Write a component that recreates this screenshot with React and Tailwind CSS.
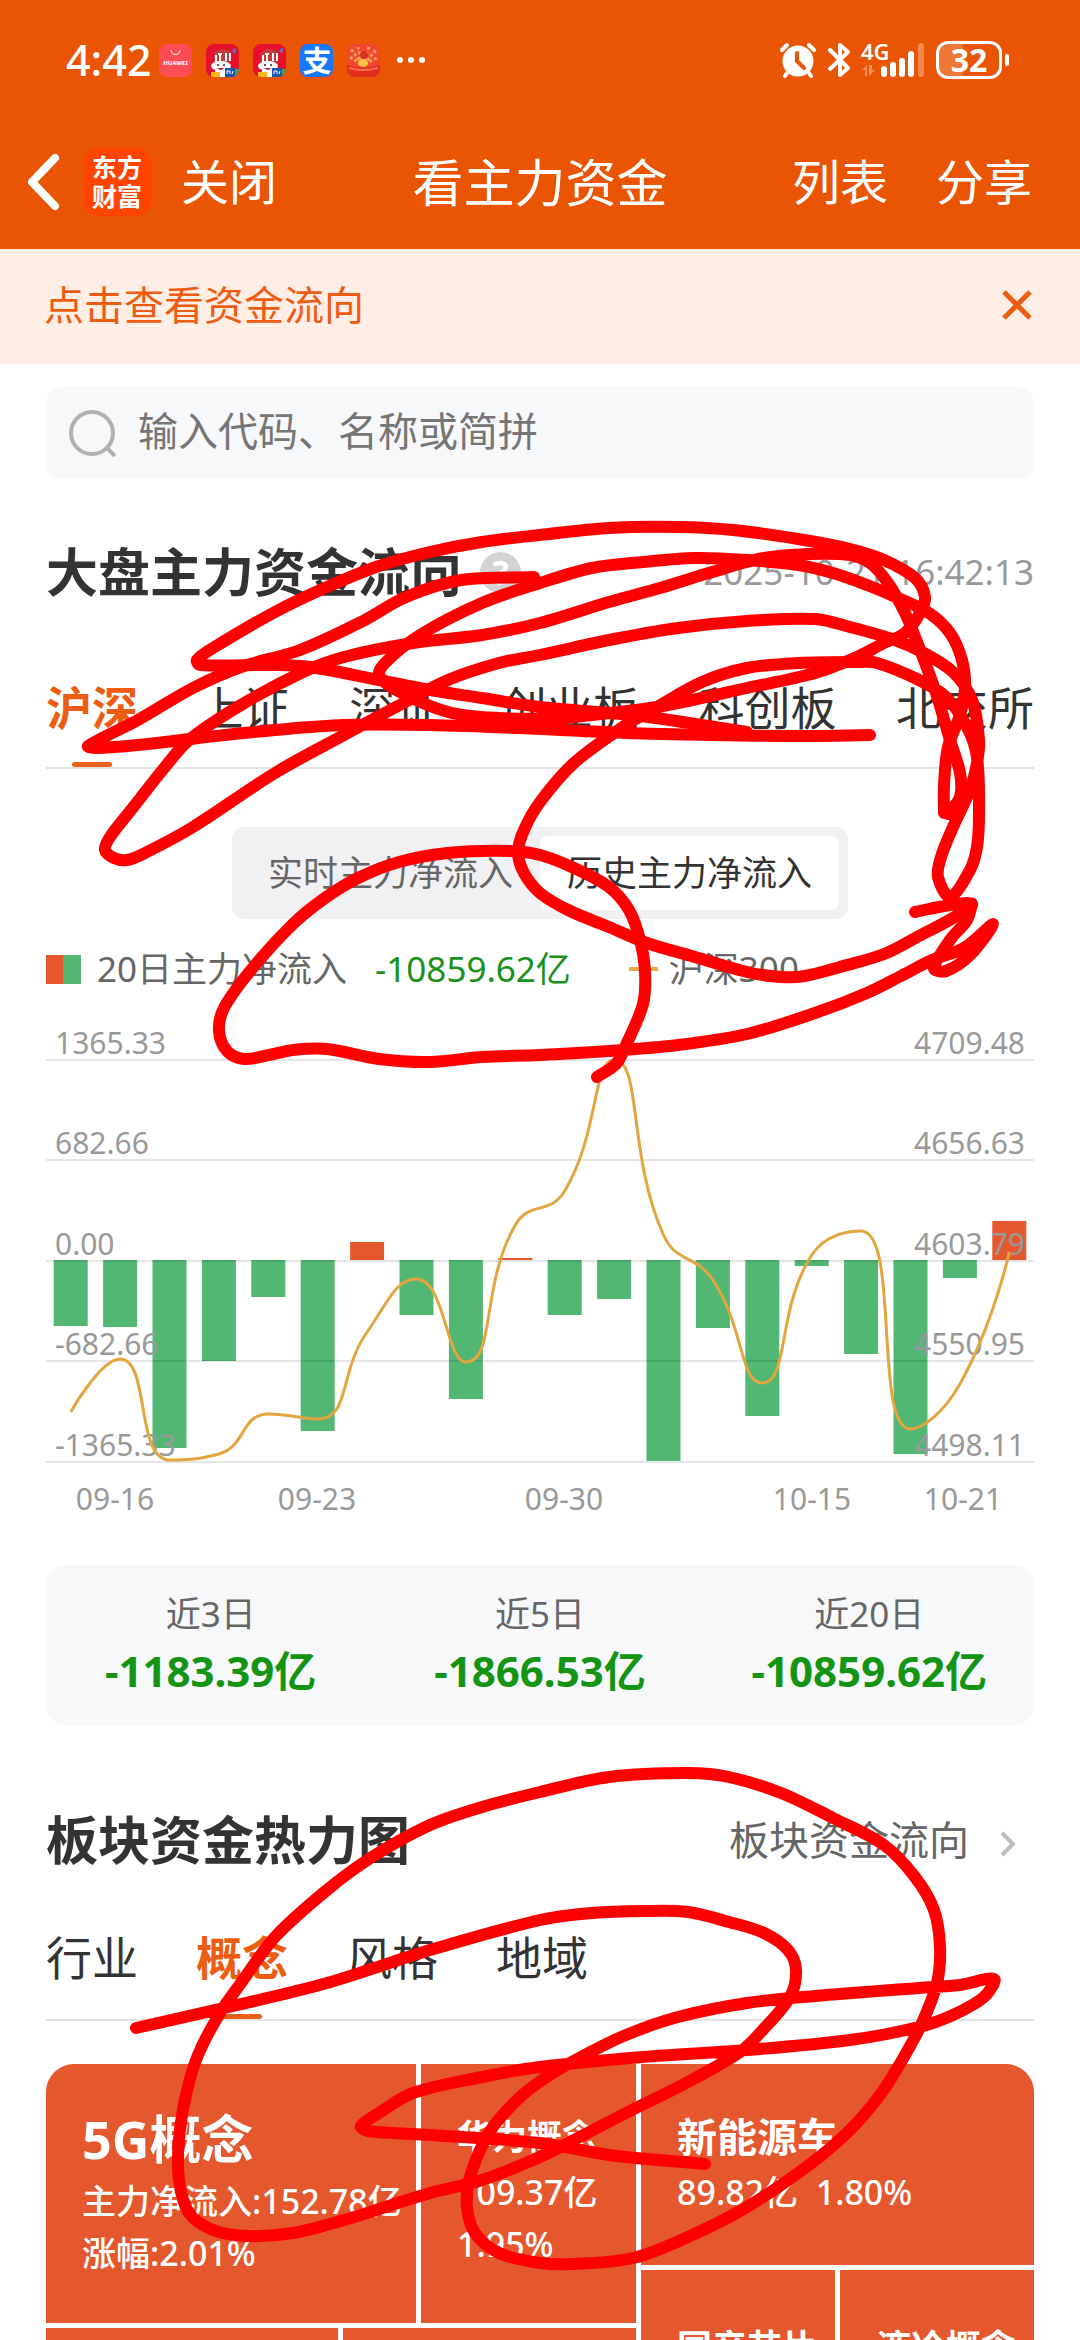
import React, { useState } from 'react';

const INDEX_TABS = ['沪深', '上证', '深证', '创业板', '科创板', '北交所'];
const SECTOR_TABS = ['行业', '概念', '风格', '地域'];

const SUMMARY = [
  { label: '近3日', value: '-1183.39亿' },
  { label: '近5日', value: '-1866.53亿' },
  { label: '近20日', value: '-10859.62亿' },
];

// Net inflow per trading day, in chart units (negative = outflow)
const FLOWS = [-66, -67, -188, -101, -37, -171, 18, -55, -139, 2, -55, -39, -201, -68, -156, -6, -94, -194, -18, 39];
// CSI 300 close, as a height in the plot
const INDEX_LINE = [382, 329, 430, 424, 384, 389, 302, 249, 332, 195, 161, 30, 205, 250, 353, 225, 201, 399, 354, 222];

const GRID_ROWS = [
  { y: 30, left: '1365.33', right: '4709.48' },
  { y: 130, left: '682.66', right: '4656.63' },
  { y: 231, left: '0.00', right: '4603.79' },
  { y: 331, left: '-682.66', right: '4550.95' },
  { y: 432, left: '-1365.33', right: '4498.11' },
];

const DATES = [
  { x: 69, label: '09-16' },
  { x: 271, label: '09-23' },
  { x: 518, label: '09-30' },
  { x: 766, label: '10-15' },
  { x: 917, label: '10-21' },
];

// Freehand pen strokes drawn over the page
const STROKES = [
  [[944, 813], [944, 785], [948, 747], [960, 715], [965, 687], [962, 660], [950, 633], [929, 613], [898, 598], [867, 585], [833, 573], [798, 565], [747, 560], [695, 558], [643, 562], [592, 568], [540, 583], [482, 603], [420, 635], [386, 662], [379, 675], [396, 690], [448, 712], [499, 718], [560, 718], [609, 713], [657, 707], [747, 688], [815, 673], [857, 657], [884, 643], [905, 633], [920, 613], [925, 597], [915, 578], [884, 560], [850, 549], [798, 539], [733, 530], [678, 527], [609, 528], [540, 535], [482, 542], [430, 552], [379, 566], [327, 587], [275, 612], [213, 648], [197, 660], [200, 665], [275, 665], [310, 667], [379, 680], [430, 690], [482, 698], [540, 707], [640, 716], [747, 732]],
  [[534, 577], [461, 580], [406, 597], [361, 622], [300, 650], [241, 667], [193, 688], [138, 720], [88, 746], [96, 748], [138, 745], [207, 737], [275, 730], [344, 725], [430, 725], [540, 729], [626, 733], [712, 735], [798, 736], [870, 735]],
  [[948, 814], [960, 797], [960, 773], [950, 740], [936, 693], [919, 647], [905, 613], [888, 583], [870, 563], [850, 555], [809, 554], [764, 558], [712, 572], [660, 588], [609, 602], [540, 623], [482, 635], [413, 643], [344, 657], [303, 672], [241, 705], [189, 740], [165, 767], [131, 810], [110, 837], [105, 850], [114, 858], [127, 860], [145, 853], [193, 827], [275, 773], [344, 735], [396, 707], [448, 680], [499, 663], [540, 655], [609, 640], [678, 628], [747, 621], [815, 619], [850, 627], [895, 640], [922, 652], [953, 672], [972, 700], [979, 740], [977, 763], [970, 790], [953, 827], [941, 857], [938, 877], [950, 897], [970, 870], [977, 847], [979, 813], [977, 757], [967, 727], [946, 697], [919, 680], [877, 663], [857, 662], [798, 663], [747, 668], [702, 682], [657, 707], [623, 727], [574, 763], [540, 802], [524, 830], [518, 852], [524, 873], [540, 893], [568, 910], [609, 927], [647, 943], [695, 957], [747, 972], [781, 977], [805, 976], [840, 967], [884, 954], [919, 936], [953, 918], [972, 904], [950, 905], [915, 912]],
  [[972, 904], [967, 920], [950, 940], [934, 968], [946, 971], [970, 955], [993, 924], [964, 948], [932, 960], [901, 976], [867, 993], [815, 1013], [747, 1034], [678, 1045], [609, 1051], [540, 1055], [482, 1057], [430, 1062], [379, 1059], [327, 1049], [293, 1050], [269, 1055], [244, 1059], [227, 1051], [219, 1031], [224, 1008], [251, 970], [293, 924], [325, 898], [358, 878], [399, 862], [448, 853], [510, 851], [540, 855], [574, 868], [609, 887], [629, 910], [640, 940], [645, 972], [643, 1004], [626, 1045], [616, 1064], [597, 1077]],
  [[136, 2028], [224, 2008], [327, 1983], [430, 1950], [540, 1920], [592, 1913], [643, 1911], [688, 1912], [729, 1922], [764, 1933], [788, 1950], [796, 1970], [790, 1997], [760, 2033], [740, 2052], [688, 2082], [626, 2113], [574, 2140], [540, 2157], [482, 2180], [430, 2193], [344, 2220], [293, 2233], [248, 2236], [213, 2230], [189, 2213], [179, 2180], [179, 2140], [186, 2095], [198, 2055], [220, 2013], [241, 1983], [275, 1937], [327, 1890], [372, 1857], [430, 1825], [482, 1807], [540, 1792], [609, 1777], [688, 1773], [729, 1777], [781, 1793], [833, 1818], [884, 1845], [915, 1877], [934, 1910], [940, 1947], [937, 1983], [922, 2023], [901, 2062], [880, 2095], [850, 2130], [809, 2165], [747, 2207], [688, 2237], [633, 2258], [574, 2264], [540, 2263], [499, 2253], [475, 2233], [467, 2207], [470, 2177], [489, 2133], [517, 2100], [545, 2078], [581, 2057], [626, 2035], [678, 2017], [747, 2003], [815, 1996], [919, 1988], [960, 1985], [994, 1979], [984, 1997], [953, 2015], [919, 2027], [850, 2040], [747, 2050], [643, 2057], [540, 2067], [482, 2077], [413, 2093], [379, 2113], [361, 2126], [368, 2131], [413, 2134], [540, 2143], [609, 2155], [705, 2164]],
];

// Catmull-Rom through every point
const penPath = (pts) => {
  let d = `M${pts[0][0]} ${pts[0][1]}`;
  for (let i = 0; i < pts.length - 1; i++) {
    const p0 = pts[i - 1] || pts[i];
    const p1 = pts[i];
    const p2 = pts[i + 1];
    const p3 = pts[i + 2] || p2;
    const len = Math.hypot(p2[0] - p1[0], p2[1] - p1[1]);
    const k1 = len / (len + Math.hypot(p1[0] - p0[0], p1[1] - p0[1])) / 3;
    const k2 = len / (len + Math.hypot(p3[0] - p2[0], p3[1] - p2[1])) / 3;
    d += `C${p1[0] + (p2[0] - p0[0]) * k1} ${p1[1] + (p2[1] - p0[1]) * k1} ${p2[0] - (p3[0] - p1[0]) * k2} ${p2[1] - (p3[1] - p1[1]) * k2} ${p2[0]} ${p2[1]}`;
  }
  return d;
};

const clamp = (v, a, b) => Math.max(Math.min(a, b), Math.min(Math.max(a, b), v));

// Smooth line that never overshoots its neighbours
const linePath = (pts) => {
  let d = `M${pts[0][0]} ${pts[0][1]}`;
  let out = pts[0];
  for (let i = 1; i < pts.length; i++) {
    const [px, py] = pts[i - 1];
    const [x, y] = pts[i];
    const next = pts[i + 1];
    let into = [x, y];
    let nextOut = [x, y];
    if (next) {
      const d0 = Math.hypot(x - px, y - py);
      const d1 = Math.hypot(next[0] - x, next[1] - y);
      const r = (0.5 * d1) / (d0 + d1);
      const cx = clamp(x + (next[0] - px) * r, x, next[0]);
      const cy = clamp(y + (next[1] - py) * r, y, next[1]);
      into = [clamp(x - ((cx - x) * d0) / d1, px, x), clamp(y - ((cy - y) * d0) / d1, py, y)];
      nextOut = [x + ((x - into[0]) * d1) / d0, y + ((y - into[1]) * d1) / d0];
    }
    d += `C${out[0]} ${out[1]} ${into[0]} ${into[1]} ${x} ${y}`;
    out = nextOut;
  }
  return d;
};

const ShoppingIcon = () => (
  <svg viewBox="0 0 33 33" className="size-[33px] rounded-lg">
    <rect width="33" height="33" fill="#ff4d55" />
    <path d="M12 6c0 6 9 6 9 0" fill="none" stroke="#fff" strokeWidth="1" />
    <text x="16.5" y="21" textAnchor="middle" fontSize="6" fontWeight="700" fill="#fff">HUAWEI</text>
  </svg>
);

const SaleIcon = () => (
  <svg viewBox="0 0 33 33" className="size-[33px] rounded-lg">
    <rect width="33" height="33" fill="#e60f2e" />
    <path d="M8 18V8q8-6 17 0v10z" fill="#c93b3b" />
    <path d="M10 11v8M14 10v8M12 10h4M20 9v8M24 9v8" stroke="#fff" strokeWidth="2" />
    <path d="M26 6l4-2-1 6z" fill="#3d86e0" />
    <ellipse cx="15" cy="22" rx="10" ry="5" fill="#fff" />
    <path d="M9 24h12v9H9z" fill="#fff" />
    <circle cx="12" cy="21" r="1" fill="#222" />
    <circle cx="18" cy="21" r="1" fill="#222" />
    <path d="M11 24q4 4 7 0z" fill="#d0212c" />
    <path d="M5 28h9v5H5z" fill="#f9b81a" />
    <path d="M19 24h10v9H19z" fill="#1657b4" />
    <path d="M21 30v-3h3v3M26 30l1-3" stroke="#fff" strokeWidth="1" fill="none" />
    <path d="M29 25h4v8h-4z" fill="#46a35b" />
  </svg>
);

const PayIcon = () => (
  <span className="flex size-[33px] items-center justify-center rounded-lg bg-[#1677ff] text-[29px] leading-[33px] font-bold">支</span>
);

const GiftIcon = () => (
  <svg viewBox="0 0 33 33" className="size-[33px] rounded-lg">
    <rect width="33" height="33" fill="#f3452f" />
    <path d="M15 20L4 5M15 20L11 3M16 20L22 3M17 20L29 6M14 20L3 13M18 20L30 14" stroke="#f6a25a" strokeWidth="3" strokeDasharray="3 2" />
    <circle cx="17" cy="11" r="4" fill="#d9311f" />
    <ellipse cx="16" cy="19" rx="5" ry="4" fill="#fcc24a" />
    <path d="M0 21q16 5 33 0v12H0z" fill="#e02d1c" />
    <path d="M2 23q14 4 29 0v2q-15 4-29 0z" fill="#f77053" />
  </svg>
);

const StatusBar = () => (
  <div className="flex h-[120px] items-center justify-between pr-[71px] pl-[66px]">
    <div className="flex items-center">
      <span className="text-[43px] leading-[60px] font-medium">4:42</span>
      <div className="ml-2 flex items-center gap-[14px]">
        <ShoppingIcon />
        <SaleIcon />
        <SaleIcon />
        <PayIcon />
        <GiftIcon />
      </div>
      <svg viewBox="0 0 28 6" className="ml-[17px] h-[6px] w-[28px]" fill="#fff">
        <circle cx="3" cy="3" r="3" />
        <circle cx="14" cy="3" r="3" />
        <circle cx="25" cy="3" r="3" />
      </svg>
    </div>
    <div className="flex items-center gap-3">
      <svg viewBox="0 0 36 36" className="size-9" fill="none" strokeLinecap="round">
        <circle cx="18" cy="19" r="15.5" fill="#fff" />
        <path d="M2 8l5-5M34 8l-5-5M7 31l-2 3M29 31l2 3" stroke="#fff" strokeWidth="4" />
        <path d="M17 11v8l7 7" stroke="#ea5504" strokeWidth="4" strokeLinejoin="round" />
      </svg>
      <svg viewBox="0 0 22 36" className="h-9 w-[22px]" fill="none" stroke="#fff" strokeWidth="4" strokeLinecap="round" strokeLinejoin="round">
        <path d="M2 8l18 18-8 7V3l8 7L2 27" />
      </svg>
      <svg viewBox="0 0 62 36" className="h-9 w-[62px] overflow-visible" fill="#fff">
        <text x="-1" y="18" fontSize="22" fontWeight="600">4G</text>
        <path d="M0 28l5-5v11H3v-6zM7 23v11l6-6h-3v-5z" opacity=".35" />
        <rect x="19" y="24" width="6" height="11" rx="3" />
        <rect x="28" y="20" width="6" height="15" rx="3" />
        <rect x="37" y="16" width="6" height="19" rx="3" />
        <rect x="46" y="9" width="6" height="26" rx="3" />
        <rect x="56" y="1" width="6" height="34" rx="3" opacity=".3" />
      </svg>
      <div className="flex items-center gap-[3px]">
        <span className="flex h-[38px] w-[66px] items-center justify-center rounded-xl border-[3px] border-white bg-linear-to-r from-white/20 from-40% to-transparent to-40% text-[32px] leading-none font-bold">32</span>
        <span className="h-3 w-1 rounded-full bg-white" />
      </div>
    </div>
  </div>
);

const NavBar = () => (
  <nav className="grid h-[124px] grid-cols-[1fr_auto_1fr] items-center px-[26px] text-[48px]">
    <div className="flex items-center">
      <button aria-label="返回">
        <svg viewBox="0 0 34 58" className="h-[58px] w-[34px]" fill="none" stroke="#fff" strokeWidth="8" strokeLinecap="round" strokeLinejoin="round">
          <path d="M29 5L6 29l23 24" />
        </svg>
      </button>
      <span className="ml-[23px] flex size-[68px] items-center rounded-2xl bg-[#ff4400] px-2 text-center text-[25px] leading-[29px] font-bold">
        东方财富
      </span>
      <button className="ml-[30px]">关闭</button>
    </div>
    <h1 className="text-[51px]">看主力资金</h1>
    <div className="flex justify-end gap-12 pr-[22px]">
      <button>列表</button>
      <button>分享</button>
    </div>
  </nav>
);

const Tabs = ({ items, active, onSelect, className }) => (
  <div role="tablist" className={`flex border-b-2 border-[#e4e4e4] text-[46px] leading-[60px] ${className}`}>
    {items.map((item) => (
      <button
        key={item}
        role="tab"
        aria-selected={item === active}
        onClick={() => onSelect(item)}
        className={`relative ${item === active ? 'font-bold text-[#ee5c12]' : 'text-[#333]'}`}
      >
        {item}
        {item === active && (
          <span className="absolute bottom-0 left-1/2 h-[5px] w-10 -translate-x-1/2 rounded-full bg-[#ea5f19]" />
        )}
      </button>
    ))}
  </div>
);

const FlowChart = () => {
  const step = 988 / 20;
  const points = INDEX_LINE.map((y, i) => [(i + 0.5) * step, y]);

  return (
    <svg viewBox="0 0 988 490" className="mt-[41px] w-full overflow-visible text-[30px]" role="img" aria-label="历史主力净流入">
      {FLOWS.map((v, i) => (
        <rect
          key={i}
          x={(i + 0.5) * step - 17}
          y={v > 0 ? 230 - v : 230}
          width="34"
          height={Math.abs(v)}
          fill={v > 0 ? '#e5572d' : '#52b773'}
        />
      ))}
      {GRID_ROWS.map((row) => (
        <g key={row.y} fill="#999">
          <line x1="0" x2="988" y1={row.y} y2={row.y} stroke="#000" strokeOpacity=".1" strokeWidth="2" />
          <text x="9" y={row.y - 6}>{row.left}</text>
          <text x="979" y={row.y - 6} textAnchor="end">{row.right}</text>
        </g>
      ))}
      <path d={linePath(points)} fill="none" stroke="#e3a53f" strokeWidth="3" />
      {DATES.map((date) => (
        <text key={date.label} x={date.x} y="480" textAnchor="middle" fill="#999">{date.label}</text>
      ))}
    </svg>
  );
};

const Tile = ({ title, lines = [], titleClass, className = '' }) => (
  <a href="#sector" className={`block overflow-hidden bg-[#e5572d] px-9 whitespace-nowrap ${className}`}>
    <div className={`mb-1 font-bold ${titleClass}`}>{title}</div>
    {lines.map((line) => (
      <div key={line} className="text-[34px] leading-[52px] font-medium whitespace-pre">{line}</div>
    ))}
  </a>
);

const HeatMap = () => (
  <div className="mt-[43px] grid grid-cols-[590fr_393fr] gap-[5px] overflow-hidden rounded-t-[28px] text-white">
    <div className="flex min-w-0 flex-col gap-[5px]">
      <div className="grid h-[259px] grid-cols-[370fr_215fr] gap-[5px]">
        <Tile title="5G概念" titleClass="text-[52px] leading-[64px]" lines={['主力净流入:152.78亿', '涨幅:2.01%']} className="pt-[43px]" />
        <Tile title="华为概念" titleClass="text-[35px] leading-[50px]" lines={['109.37亿', '1.95%']} className="pt-12" />
      </div>
      <div className="grid h-[200px] grid-cols-[292fr_293fr] gap-[5px]">
        <Tile />
        <Tile />
      </div>
    </div>
    <div className="flex min-w-0 flex-col gap-[5px]">
      <Tile title="新能源车" titleClass="text-[40px] leading-[50px]" lines={['89.82亿  1.80%']} className="h-[201px] pt-12" />
      <div className="grid h-[200px] grid-cols-2 gap-[5px]">
        <Tile title="国产芯片" titleClass="text-[35px] leading-[50px]" className="pt-[52px]" />
        <Tile title="液冷概念" titleClass="text-[35px] leading-[50px]" className="pt-[52px]" />
      </div>
    </div>
  </div>
);

const PenMarks = () => (
  <svg viewBox="0 0 1080 2340" className="pointer-events-none absolute inset-x-0 top-0 w-full" fill="none" stroke="#ff0000" strokeWidth="12" strokeLinecap="round" strokeLinejoin="round">
    {STROKES.map((pts, i) => (
      <path key={i} d={penPath(pts)} />
    ))}
  </svg>
);

const App = () => {
  const [market, setMarket] = useState('沪深');
  const [sector, setSector] = useState('概念');
  const [notice, setNotice] = useState(true);
  const [mode, setMode] = useState('history');

  const modeClass = (m) =>
    `flex-1 rounded-lg ${mode === m ? 'bg-white text-[#333]' : 'text-[#666]'}`;

  return (
    <div className="relative h-screen overflow-hidden bg-white font-['Noto_Sans','Noto_Sans_CJK_SC',sans-serif]">
      <header className="bg-[#ea5504] pb-[5px] text-white">
        <StatusBar />
        <NavBar />
      </header>

      {notice && (
        <div className="flex h-[115px] items-center justify-between bg-[#ffeee6] pr-12 pb-1 pl-11 text-[40px] text-[#ee5c12]">
          <a href="#flow">点击查看资金流向</a>
          <button aria-label="关闭提示" onClick={() => setNotice(false)}>
            <svg viewBox="0 0 30 30" className="size-[30px]" stroke="currentColor" strokeWidth="5">
              <path d="M2 2l26 26M28 2L2 28" />
            </svg>
          </button>
        </div>
      )}

      <main className="px-[46px] pt-[23px]">
        <label className="flex h-[92px] items-center gap-[22px] rounded-2xl bg-[#f7f8fa] pl-[23px]">
          <svg viewBox="0 0 47 47" className="size-[47px]" fill="none" stroke="#b0b0b0" strokeWidth="4">
            <circle cx="23" cy="23" r="21" />
            <path d="M37 37l9 9" />
          </svg>
          <input
            type="text"
            aria-label="搜索"
            placeholder="输入代码、名称或简拼"
            className="flex-1 bg-transparent pb-1 text-[40px] outline-none placeholder:text-[#757575]"
          />
        </label>

        <section>
          <div className="mt-[63px] flex items-center justify-between leading-[60px]">
            <h2 className="flex items-center text-[52px] font-bold text-[#333]">
              大盘主力资金流向
              <button aria-label="说明" className="ml-[18px] flex size-[41px] items-center justify-center rounded-full bg-[#d3d3d5] text-[34px] leading-none font-bold text-white">?</button>
            </h2>
            <time className="text-[35px] text-[#999]">2025-10-21 16:42:13</time>
          </div>

          <Tabs items={INDEX_TABS} active={market} onSelect={setMarket} className="mt-[75px] justify-between *:pb-[30px]" />

          <div className="mx-auto mt-[58px] flex h-[92px] w-[616px] rounded-xl bg-[#f1f1f4] p-[9px] text-[35px]">
            <button className={modeClass('live')} onClick={() => setMode('live')}>实时主力净流入</button>
            <button className={modeClass('history')} onClick={() => setMode('history')}>历史主力净流入</button>
          </div>

          <div className="mt-[30px] flex h-10 items-center text-[35px] leading-10 text-[#666]">
            <span className="h-[29px] w-[17px] bg-[#e5572d]" />
            <span className="h-[29px] w-[18px] bg-[#52b773]" />
            <span className="ml-4">20日主力净流入</span>
            <span className="ml-7 text-[#1a911a]">-10859.62亿</span>
            <span className="ml-[58px] h-1 w-[29px] bg-[#efa942]" />
            <span className="ml-[11px]">沪深300</span>
          </div>

          <FlowChart />

          <dl className="mt-[45px] grid h-[160px] grid-cols-3 rounded-[20px] bg-[#f7f8fa] pt-[22px] text-center">
            {SUMMARY.map((item) => (
              <div key={item.label}>
                <dt className="text-[35px] leading-[54px] text-[#666]">{item.label}</dt>
                <dd className="text-[42px] leading-[60px] font-bold text-[#139413]">{item.value}</dd>
              </div>
            ))}
          </dl>
        </section>

        <section>
          <div className="mt-[85px] flex items-center justify-between leading-[60px]">
            <h2 className="text-[52px] font-bold text-[#333]">板块资金热力图</h2>
            <a href="#sectors" className="flex items-center gap-[31px] pr-[18px] text-[40px] text-[#666]">
              板块资金流向
              <svg viewBox="0 0 16 26" className="mt-2 h-[26px] w-4" fill="none" stroke="#bdbdbd" strokeWidth="4">
                <path d="M2 2l11 11L2 24" />
              </svg>
            </a>
          </div>

          <Tabs items={SECTOR_TABS} active={sector} onSelect={setSector} className="mt-[57px] gap-[58px] *:pb-8" />

          <HeatMap />
        </section>
      </main>

      <PenMarks />
    </div>
  );
};

export default App;
